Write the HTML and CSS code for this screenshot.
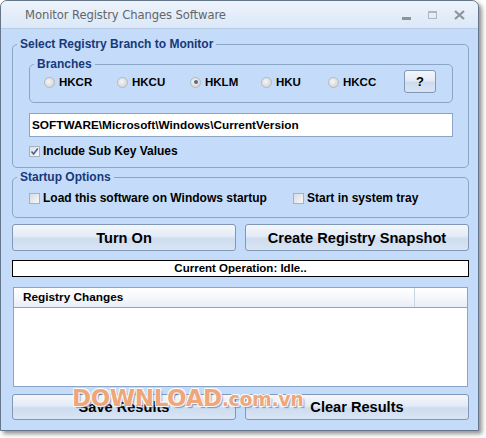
FILE: index.html
```html
<!DOCTYPE html>
<html>
<head>
<meta charset="utf-8">
<link rel="stylesheet" href="styles.css">
</head>
<body>
<div class="window">
  <div class="titlebar">
    <span class="title">Monitor Registry Changes Software</span>
    <div class="controls">
      <span class="ctl min"></span>
      <span class="ctl max"></span>
      <svg class="ctl close" width="11" height="10" viewBox="0 0 11 10"><path d="M1 1 L10 9 M10 1 L1 9" stroke="#8d949c" stroke-width="2.2"/></svg>
    </div>
  </div>
  <div class="client">
    <fieldset class="group g1">
      <legend>Select Registry Branch to Monitor</legend>
      <fieldset class="group g2">
        <legend>Branches</legend>
        <div class="radios">
          <label class="radio r1"><span class="dot"></span>HKCR</label>
          <label class="radio r2"><span class="dot"></span>HKCU</label>
          <label class="radio r3"><span class="dot on"></span>HKLM</label>
          <label class="radio r4"><span class="dot"></span>HKU</label>
          <label class="radio r5"><span class="dot"></span>HKCC</label>
          <button class="btn help">?</button>
        </div>
      </fieldset>
      <div class="pathbox">SOFTWARE\Microsoft\Windows\CurrentVersion</div>
      <label class="check sub"><span class="box checked"><svg width="9" height="9" viewBox="0 0 9 9"><path d="M1.5 4.5 L3.6 7 L7.8 1.5" fill="none" stroke="#4a5f9a" stroke-width="1.6"/></svg></span>Include Sub Key Values</label>
    </fieldset>
    <fieldset class="group g3">
      <legend>Startup Options</legend>
      <div class="startrow">
        <label class="check load"><span class="box"></span>Load this software on Windows startup</label>
        <label class="check tray"><span class="box"></span>Start in system tray</label>
      </div>
    </fieldset>
    <div class="btnrow top">
      <button class="btn big">Turn On</button>
      <button class="btn big">Create Registry Snapshot</button>
    </div>
    <div class="status">Current Operation: Idle..</div>
    <div class="list">
      <div class="lhead"><div class="col1">Registry Changes</div><div class="col2"></div></div>
      <div class="lbody"></div>
    </div>
    <div class="btnrow bottom">
      <button class="btn big">Save Results</button>
      <button class="btn big">Clear Results</button>
    </div>
    <div class="watermark">DOWNLOAD<span class="wm-small">.com.vn</span></div>
  </div>
</div>
</body>
</html>
```
FILE: styles.css
```css
* { box-sizing: border-box; }
html, body { margin: 0; padding: 0; background: #ffffff; }
body { width: 486px; height: 438px; overflow: hidden; font-family: "Liberation Sans", Arial, sans-serif; }

.window {
  width: 479px;
  height: 431px;
  border: 1px solid #66768a;
  border-radius: 7px 7px 0 0;
  background: #c4dcfa;
  box-shadow: 3px 3px 4px rgba(60, 60, 60, 0.55);
  display: flex;
  flex-direction: column;
  overflow: hidden;
  position: relative;
}

.titlebar {
  height: 28px;
  flex: 0 0 28px;
  background: linear-gradient(#edf3fb, #dbe8f8);
  border-bottom: 1px solid #b9cce6;
  display: flex;
  align-items: center;
  padding-left: 24px;
  padding-right: 10px;
}
.title {
  font-family: "DejaVu Sans", sans-serif;
  font-size: 11.6px;
  color: #62666c;
  letter-spacing: -0.1px;
  flex: 1;
}
.controls { display: flex; align-items: center; gap: 17px; }
.ctl { display: block; }
.min { width: 9px; height: 3px; background: #8d949c; margin-top: 7px; }
.max { width: 9px; height: 8px; border: 1px solid #b0b6bd; border-top-width: 2px; }
.close { margin-right: 3px; }

.client {
  flex: 1;
  padding: 0 9px 0 11px;
  position: relative;
}

.group {
  margin: 0;
  border: 1px solid #8ba5c6;
  border-radius: 5px;
  min-width: 0;
}
.group > legend {
  font-size: 12px;
  font-weight: bold;
  color: #17397a;
  line-height: 12px;
  padding: 0 3px;
}

.g1 {
  margin-top: 9px;
  padding: 8px 15px 10px 16px;
  height: 130px;
}
.g1 > legend { margin-left: -12px; }
.g2 {
  padding: 0 16px 7px 14px;
  height: 45px;
}
.g2 > legend { margin-left: -10px; }
.radios {
  display: flex;
  align-items: center;
  height: 24px;
}
.radio {
  display: flex;
  align-items: center;
  font-size: 11.5px;
  font-weight: bold;
  color: #000;
  gap: 4px;
}
.r1 { width: 73px; }
.r2 { width: 73px; }
.r3 { width: 71px; }
.r4 { width: 67px; }
.r5 { width: 71px; }
.dot {
  width: 11px;
  height: 11px;
  border-radius: 50%;
  border: 1px solid #b4b8be;
  background: radial-gradient(circle at 40% 40%, #f6f6f6, #c9ccd0);
  display: inline-flex;
  align-items: center;
  justify-content: center;
}
.dot.on::after {
  content: "";
  width: 4px;
  height: 4px;
  border-radius: 50%;
  background: #5e6b7e;
}

.btn {
  font-family: "Liberation Sans", Arial, sans-serif;
  font-weight: bold;
  color: #000;
  border: 1px solid #8097b6;
  border-radius: 3px;
  background: linear-gradient(#f4f7fc 0%, #e3ebf6 45%, #cddcef 55%, #d9e5f4 100%);
  padding: 0;
}
.help {
  width: 32px;
  height: 23px;
  font-size: 13px;
  margin-left: auto;
  margin-top: -1px;
}

.pathbox {
  margin-top: 10px;
  height: 24px;
  width: 424px;
  background: #fff;
  border: 1px solid #8ba5c6;
  font-size: 11.8px;
  font-weight: bold;
  line-height: 22px;
  padding-left: 2px;
  color: #000;
  white-space: nowrap;
}

.check {
  display: flex;
  align-items: center;
  font-size: 12px;
  font-weight: bold;
  color: #000;
  gap: 3px;
  height: 14px;
  white-space: nowrap;
}
.sub { margin-top: 7px; }
.box {
  width: 11px;
  height: 11px;
  border: 1px solid #a9b0b8;
  background: linear-gradient(135deg, #d8dbe0, #f7f8fa);
  display: inline-flex;
  align-items: center;
  justify-content: center;
}
.box.checked { background: linear-gradient(135deg, #dde1e6, #f7f8fa); }
.box svg { display: block; }

.g3 {
  margin-top: 3px;
  padding: 8px 10px 10px 16px;
  height: 47px;
}
.g3 > legend { margin-left: -12px; }
.startrow { display: flex; align-items: center; }
.load { width: 264px; }

.btnrow {
  display: flex;
  gap: 9px;
}
.btnrow .big {
  width: 224px;
  height: 27px;
  font-size: 14.6px;
}
.btnrow.top { margin-top: 6px; }
.btnrow.bottom { margin-top: 7px; }
.btnrow.bottom .big { height: 26px; }

.status {
  margin-top: 9px;
  width: 457px;
  height: 17px;
  background: #fff;
  border: 1px solid #000;
  font-size: 11.5px;
  font-weight: bold;
  text-align: center;
  line-height: 15px;
  color: #000;
}

.list {
  margin-top: 10px;
  margin-left: 1px;
  width: 455px;
  height: 100px;
  border: 1px solid #8ba5c6;
  background: #fff;
  display: flex;
  flex-direction: column;
}
.lhead {
  height: 20px;
  flex: 0 0 20px;
  display: flex;
  background: linear-gradient(#ffffff, #f3f6fa 60%, #e7eef7);
  border-bottom: 1px solid #8ba5c6;
}
.col1 {
  width: 401px;
  font-size: 11.8px;
  font-weight: bold;
  color: #000;
  line-height: 19px;
  padding-left: 9px;
  border-right: 1px solid #c9d5e4;
}
.col2 { flex: 1; }
.lbody { flex: 1; }

.watermark {
  position: absolute;
  left: 71px;
  top: 356px;
  font-family: "DejaVu Sans", sans-serif;
  font-weight: bold;
  font-size: 23px;
  letter-spacing: -0.4px;
  color: rgba(234, 132, 70, 0.72);
  text-shadow: -1px -1px 0 rgba(255,255,255,0.8), 1px -1px 0 rgba(255,255,255,0.8), -1px 1px 0 rgba(255,255,255,0.8), 1px 1px 0 rgba(255,255,255,0.8), 2px 2px 1px rgba(60,90,140,0.55);
  pointer-events: none;
}
.wm-small { font-size: 19px; }
```
